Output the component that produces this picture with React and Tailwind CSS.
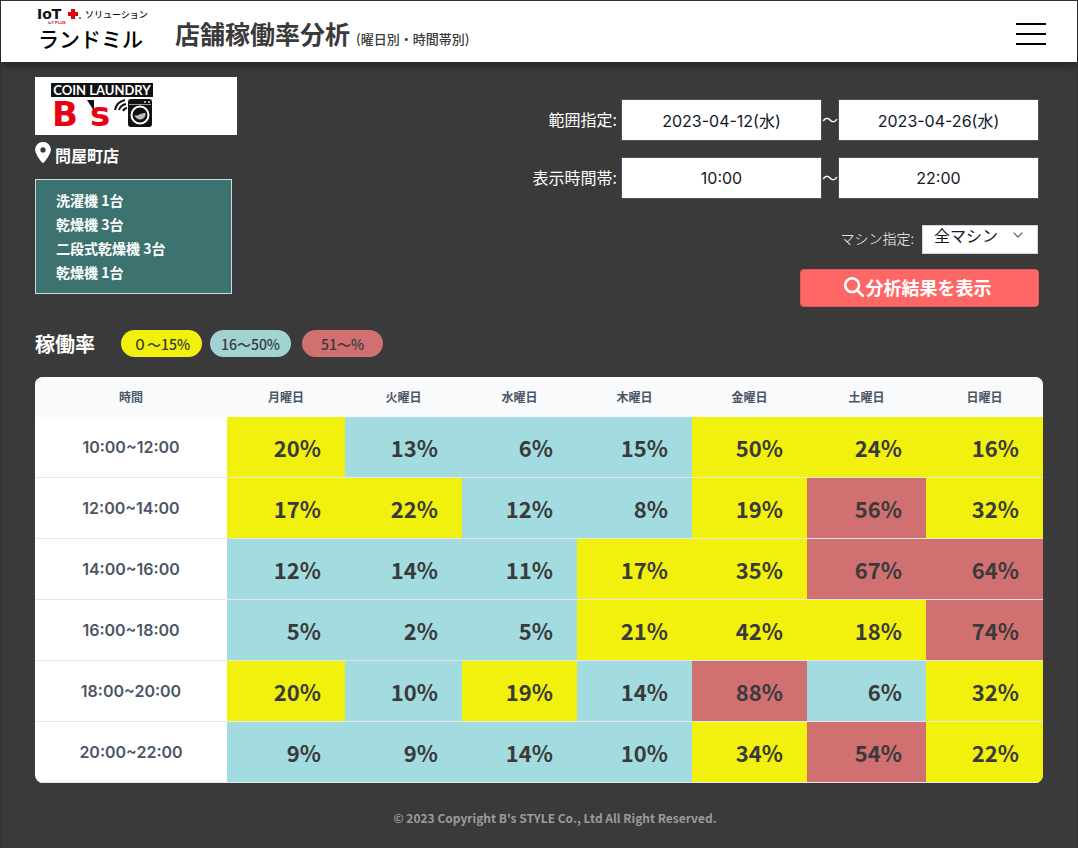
import { useState } from "react";
import { FaLocationDot, FaMagnifyingGlass } from "react-icons/fa6";
import { ChevronDown } from "lucide-react";

const MACHINES = ["洗濯機 1台", "乾燥機 3台", "二段式乾燥機 3台", "乾燥機 1台"];

const LEGEND = [
  { label: "０～15%", className: "bg-[#f2f00d]" },
  { label: "16～50%", className: "bg-[#a1d3d3]" },
  { label: "51～%", className: "bg-[#d07070] ml-[3px]" },
];

const COLUMNS = [
  { label: "時間", width: "w-[192px]" },
  { label: "月曜日", width: "w-[118px]" },
  { label: "火曜日", width: "w-[117px]" },
  { label: "水曜日", width: "w-[115px]" },
  { label: "木曜日", width: "w-[115px]" },
  { label: "金曜日", width: "w-[115px]" },
  { label: "土曜日", width: "w-[119px]" },
  { label: "日曜日", width: "w-[117px]" },
];

const ROWS = [
  { time: "10:00~12:00", rates: [20, 13, 6, 15, 50, 24, 16] },
  { time: "12:00~14:00", rates: [17, 22, 12, 8, 19, 56, 32] },
  { time: "14:00~16:00", rates: [12, 14, 11, 17, 35, 67, 64] },
  { time: "16:00~18:00", rates: [5, 2, 5, 21, 42, 18, 74] },
  { time: "18:00~20:00", rates: [20, 10, 19, 14, 88, 6, 32] },
  { time: "20:00~22:00", rates: [9, 9, 14, 10, 34, 54, 22] },
];

function rateColor(rate) {
  if (rate > 50) return "bg-[#d07070]";
  if (rate > 15) return "bg-[#f2f00d]";
  return "bg-[#a2dce0]";
}

function BrandLogo() {
  return (
    <svg width="114" height="56" viewBox="0 0 114 56" role="img" aria-label="IoT+ ソリューション ランドミル">
      <text x="0" y="15" fontFamily="DejaVu Sans" fontWeight="700" fontSize="14" fill="#111">IoT</text>
      <path d="M34 5h4v3h3v4h-3v3h-4v-3h-3V8h3z" fill="#e60012" />
      <circle cx="43" cy="14" r="1" fill="#555" />
      <text x="11" y="20" fontFamily="Liberation Sans" fontWeight="700" fontSize="4" fill="#555">
        IoT <tspan fill="#e60012">PLUS</tspan>
      </text>
      <text x="48" y="14" fontFamily="Noto Sans CJK JP" fontWeight="500" fontSize="9" fill="#111">ソリューション</text>
      <text x="1" y="43" fontFamily="Noto Sans CJK JP" fontWeight="500" fontSize="21" fill="#000">ランドミル</text>
    </svg>
  );
}

function ShopLogo() {
  return (
    <svg width="104" height="58" viewBox="0 0 104 58" role="img" aria-label="COIN LAUNDRY B's">
      <rect x="0" y="6" width="102" height="14" fill="#111" />
      <text x="51" y="18" textAnchor="middle" fontFamily="Lato" fontWeight="700" fontSize="13" fill="#fff">COIN LAUNDRY</text>
      <text x="1" y="49" fontFamily="DejaVu Sans" fontWeight="700" fontSize="34" fill="#e60012">B</text>
      <path d="M36 23h7v11z" fill="#111" />
      <text x="39" y="49" fontFamily="DejaVu Sans" fontWeight="700" fontSize="34" fill="#e60012">s</text>
      <g fill="none" stroke="#111" strokeWidth="2">
        <path d="M64 33a13 13 0 0 1 10-10" />
        <path d="M68 33a9 9 0 0 1 7-6" />
        <path d="M72 34a5 5 0 0 1 4-3" />
      </g>
      <rect x="77" y="22" width="24" height="28" rx="3" fill="#111" />
      <path d="M78 27.5h22" stroke="#999" strokeWidth="1" />
      <circle cx="94" cy="25" r="1" fill="#ddd" />
      <circle cx="98" cy="25" r="1" fill="#ddd" />
      <circle cx="89" cy="38" r="8.5" fill="#111" stroke="#fff" strokeWidth="2" />
      <path d="M83.500 38c3 2 5-2 11-2a5.500 5.500 0 0 1-11 2z" fill="#bbb" />
    </svg>
  );
}

function RangeRow({ id, label, from, to }) {
  const [start, setStart] = useState(from);
  const [end, setEnd] = useState(to);
  const box =
    "h-[42px] w-[201px] border border-[#4b5058] bg-white text-center font-[Inter,'Noto_Sans_CJK_JP',sans-serif] text-base text-gray-900";

  return (
    <div className="flex items-center">
      <label htmlFor={id} className="mr-1 pb-0.5 text-base">{label}</label>
      <input id={id} className={box} value={start} onChange={(e) => setStart(e.target.value)} />
      <span className="w-4 pb-0.5 text-base">～</span>
      <input aria-label={`${label}終了`} className={box} value={end} onChange={(e) => setEnd(e.target.value)} />
    </div>
  );
}

export default function App() {
  const [machine, setMachine] = useState("全マシン");

  return (
    <div className="min-h-screen border border-[#333] bg-[#3a3a3a] font-['Noto_Sans_CJK_JP',sans-serif] text-white">
      <header className="flex h-[61px] items-center bg-white pr-[31px] pl-9 text-[#3a3a3a] shadow-[0_4px_8px_rgba(0,0,0,0.4)]">
        <BrandLogo />
        <h1 className="ml-6 flex items-baseline gap-1.5 pt-2 text-[25px] leading-9 font-bold">
          店舗稼働率分析
          <span className="text-[13px] font-medium">(曜日別・時間帯別)</span>
        </h1>
        <button type="button" aria-label="メニュー" className="ml-auto flex flex-col gap-2 pt-1">
          <span className="h-0.5 w-[30px] bg-black" />
          <span className="h-0.5 w-[30px] bg-black" />
          <span className="h-0.5 w-[30px] bg-black" />
        </button>
      </header>

      <main className="px-[34px] pt-[15px]">
        <div className="flex items-start justify-between">
          {/* Shop */}
          <section>
            <div className="flex h-[58px] w-[202px] items-center bg-white pl-4">
              <ShopLogo />
            </div>
            <div className="flex h-[42px] items-center gap-1">
              <FaLocationDot className="mb-2 h-[21px] w-4" />
              <span className="pb-0.5 text-base font-bold">問屋町店</span>
            </div>
            <ul className="mt-0.5 w-[197px] border border-gray-300 bg-[#3c7270] pt-2 pb-[9px] pl-5 text-sm leading-6 font-bold">
              {MACHINES.map((m, i) => (
                <li key={i}>{m}</li>
              ))}
            </ul>
          </section>

          {/* Filters */}
          <form className="mr-1 flex flex-col items-end pt-[22px]" onSubmit={(e) => e.preventDefault()}>
            <div className="flex flex-col items-end gap-4">
              <RangeRow id="date" label="範囲指定:" from="2023-04-12(水)" to="2023-04-26(水)" />
              <RangeRow id="hours" label="表示時間帯:" from="10:00" to="22:00" />
            </div>
            <div className="mt-[26px] flex items-center gap-2 pr-px">
              <label htmlFor="machine" className="pb-1 text-sm font-light">マシン指定:</label>
              <div className="relative">
                <select
                  id="machine"
                  value={machine}
                  onChange={(e) => setMachine(e.target.value)}
                  className="block h-[29px] w-[116px] appearance-none border border-gray-300 bg-white pb-2.5 pl-[11px] text-base leading-4 text-gray-900"
                >
                  <option>全マシン</option>
                  <option>洗濯機</option>
                  <option>乾燥機</option>
                </select>
                <ChevronDown className="pointer-events-none absolute top-0.5 right-3 size-4 text-gray-500" />
              </div>
            </div>
            <button
              type="submit"
              className="mt-[15px] flex h-[38px] w-[239px] items-center justify-center gap-0.5 rounded border border-[#d95c5c] bg-[#ff6767] pr-1 pb-0.5 text-lg font-bold"
            >
              <FaMagnifyingGlass className="size-5" />
              分析結果を表示
            </button>
          </form>
        </div>

        <div className="mt-[23px] flex h-[27px] items-center gap-2">
          <h2 className="mr-[18px] text-xl font-bold">稼働率</h2>
          {LEGEND.map((l) => (
            <span
              key={l.label}
              className={`flex h-[27px] w-[81px] items-center justify-center rounded-full text-sm font-medium text-[#3a3a3a] ${l.className}`}
            >
              {l.label}
            </span>
          ))}
        </div>

        <div className="mt-5 overflow-hidden rounded-lg bg-white">
          <table className="w-full table-fixed border-separate border-spacing-0 text-[#3a3a3a]">
            <thead>
              <tr className="h-10 bg-gray-50 text-xs text-gray-600">
                {COLUMNS.map((c) => (
                  <th key={c.label} scope="col" className={`font-bold ${c.width}`}>{c.label}</th>
                ))}
              </tr>
            </thead>
            <tbody>
              {ROWS.map((row) => (
                <tr key={row.time} className="h-[61px]">
                  <th
                    scope="row"
                    className="border-b border-gray-200 font-[Inter,sans-serif] text-base font-semibold text-gray-600"
                  >
                    {row.time}
                  </th>
                  {row.rates.map((rate, i) => (
                    <td
                      key={i}
                      className={`border-b border-gray-200 pr-6 text-right text-[22px] font-bold ${rateColor(rate)}`}
                    >
                      {rate}%
                    </td>
                  ))}
                </tr>
              ))}
            </tbody>
          </table>
        </div>
      </main>

      <footer className="py-[25px] pl-8 text-center text-xs leading-5 font-bold text-[#9a9a9a]">
        © 2023 Copyright B's STYLE Co., Ltd All Right Reserved.
      </footer>
    </div>
  );
}
